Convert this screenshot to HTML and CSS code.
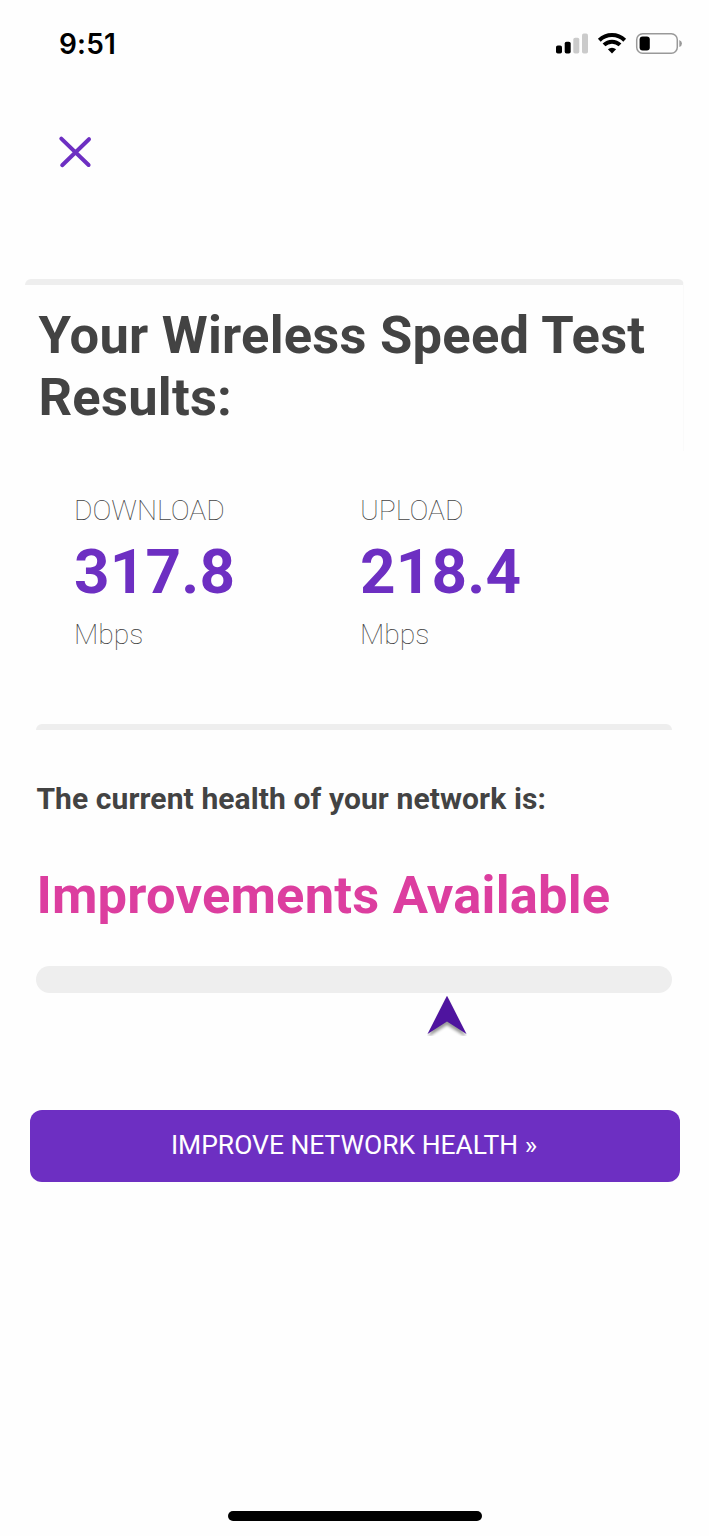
FILE: index.html
```html
<!DOCTYPE html>
<html lang="en">
<head>
<meta charset="utf-8">
<title>Speed Test Results</title>
<link rel="stylesheet" href="styles.css">
</head>
<body>
<div class="screen">
  <header class="status-bar">
    <span class="time">9:51</span>
    <svg class="status-icons" width="130" height="26" viewBox="0 0 130 26" aria-hidden="true">
      <rect x="1" y="15.500" width="6" height="8" rx="1.8" fill="#000"/>
      <rect x="9.700" y="11.700" width="6" height="11.800" rx="1.8" fill="#000"/>
      <rect x="18.300" y="7.700" width="6" height="15.800" rx="1.8" fill="#cbcbcb"/>
      <rect x="27" y="3.600" width="6" height="19.900" rx="1.800" fill="#cbcbcb"/>
      <g fill="none" stroke="#000" stroke-width="4">
        <path d="M44.300 10.200A18.200 18.200 0 0 1 69.700 10.200"/>
        <path d="M49 14.900A11.500 11.500 0 0 1 65 14.900"/>
      </g>
      <path d="M57 23.600L52.900 19.300A6 6 0 0 1 61.100 19.300Z" fill="#000"/>
      <rect x="81.700" y="3.700" width="40.600" height="19.600" rx="6" fill="none" stroke="#999" stroke-width="1.500"/>
      <rect x="84.600" y="6.600" width="10.200" height="13.800" rx="3" fill="#000"/>
      <path d="M124.300 10Q127 11 127 13.500T124.300 17Z" fill="#999"/>
    </svg>
  </header>
  <nav class="toolbar">
    <svg class="close" width="34" height="34" viewBox="0 0 34 34" role="img" aria-label="Close">
      <path d="M3.300 3.600L30.600 30M31 4.200L4.200 30.200" fill="none" stroke="#6d2fc2" stroke-width="4" stroke-linecap="round"/>
    </svg>
  </nav>
  <main>
    <section class="card results-card">
      <h1 class="title">Your Wireless Speed Test Results:</h1>
    </section>
    <section class="speeds">
      <div class="speed">
        <span class="label">DOWNLOAD</span>
        <span class="value">317.8</span>
        <span class="label">Mbps</span>
      </div>
      <div class="speed">
        <span class="label">UPLOAD</span>
        <span class="value">218.4</span>
        <span class="label">Mbps</span>
      </div>
    </section>
    <section class="card health-card">
      <h2 class="subtitle">The current health of your network is:</h2>
      <p class="health">Improvements Available</p>
      <div class="track"></div>
      <svg class="pointer" width="42" height="42" viewBox="0 0 42 42" aria-hidden="true">
        <defs><filter id="soft" x="-20%" y="-20%" width="140%" height="140%"><feGaussianBlur stdDeviation="1.5"/></filter></defs>
        <path d="M21 4L40 43L21 31L2 43Z" fill="#000" opacity=".4" filter="url(#soft)"/>
        <path d="M0 0H21L1 40V42H0ZM42 0H21L41 40V42H42Z" fill="#fefefe"/>
        <path d="M21 1.800L40.500 40L21 27.500L1.500 40Z" fill="#4f149f"/>
      </svg>
    </section>
    <button class="cta">IMPROVE NETWORK HEALTH »</button>
  </main>
  <footer class="home"><div class="home-bar"></div></footer>
</div>
</body>
</html>
```
FILE: styles.css
```css
* { box-sizing: border-box; }
body { margin: 0; background: #fefefe; font-family: Roboto, "Liberation Sans", sans-serif; color: #434343; }
h1, h2, p { margin: 0; }
.screen { display: flex; flex-direction: column; width: 709px; height: 1536px; overflow: hidden; }
.status-bar { display: flex; justify-content: space-between; height: 94px; padding: 30px 24px 0 59px; }
.time { height: 28px; font: 600 28px/28px Inter, sans-serif; letter-spacing: .2px; color: #000; }
.toolbar { height: 185px; padding: 41px 58px 0; }
.close, .pointer, .status-icons { display: block; }
main { flex: 1; }
.card { border-top: 6px solid #eee; border-radius: 6px 6px 0 0; }
.results-card { height: 172px; margin: 0 25px; padding: 19px 0 0 13.500px; border-right: 1px solid #fafafa; }
.title { font-size: 52.500px; line-height: 62.400px; font-weight: 700; letter-spacing: .230px; }
.speeds { display: flex; height: 273px; padding: 43px 0 0 74px; }
.speed { display: flex; flex-direction: column; width: 286px; }
.label { height: 34px; font-size: 28.300px; line-height: 34px; font-weight: 100; }
.value { height: 74px; margin: 7px 0 9px; font-size: 62px; line-height: 74px; font-weight: 700; letter-spacing: .2px; color: #6d2fc2; }
.health-card { height: 386px; margin: 0 36.600px 0 36.400px; padding-top: 51px; }
.subtitle { font-size: 30px; line-height: 36px; font-weight: 700; letter-spacing: .100px; }
.health { margin-top: 46.500px; font-size: 52.500px; line-height: 62px; font-weight: 700; letter-spacing: .200px; color: #dc3e9f; }
.track { height: 26.500px; margin-top: 40.500px; border-radius: 14px; background: #eee; }
.pointer { margin: 1px 0 0 389.600px; }
.cta { display: block; width: 650px; height: 72px; margin: 0 0 0 29.500px; padding: 0 1px 2px 0; border: 0; border-radius: 12px; background: #6d2fc2; color: #fff; font: 400 26.450px/70px Roboto, sans-serif; }
.home { display: flex; justify-content: center; height: 25px; }
.home-bar { width: 254px; height: 10px; border-radius: 5px; background: #000; }
```
